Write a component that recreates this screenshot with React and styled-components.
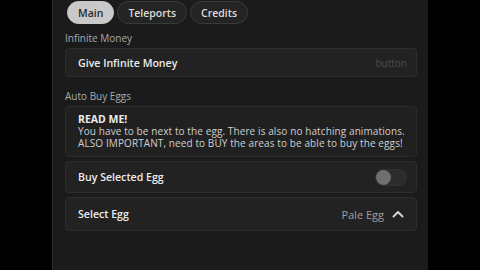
import React from 'react';
import styled, { createGlobalStyle } from 'styled-components';

const Global = createGlobalStyle`
  html, body { margin: 0; padding: 0; background: #000; }
  body { font-family: "Open Sans", "Noto Sans", sans-serif; }
  * { box-sizing: border-box; }
`;

const Screen = styled.div`
  width: 480px;
  height: 270px;
  display: flex;
  background: #000;
  overflow: hidden;
`;

const Panel = styled.div`
  margin-left: 52px;
  width: 376px;
  height: 100%;
  background: #1b1b1c;
  border-left: 1px solid #2a2d3a;
  padding: 1px 11px 0 12px;
  display: flex;
  flex-direction: column;
`;

const Tabs = styled.div`
  display: flex;
  gap: 3px;
  padding-left: 2px;
  margin-bottom: 8px;
`;

const Tab = styled.div`
  height: 23px;
  padding: 0 10px;
  border-radius: 12px;
  display: flex;
  align-items: center;
  font-size: 10.5px;
  font-weight: 600;
  color: ${p => (p.$active ? '#2a2a2a' : '#dcdcdc')};
  background: ${p => (p.$active ? '#c9c9c9' : '#242424')};
  border: 1px solid ${p => (p.$active ? '#c9c9c9' : '#3a3a3a')};
`;

const Label = styled.div`
  font-size: 10px;
  color: #a9a9a9;
  font-weight: 500;
  height: 13px;
  line-height: 13px;
  margin-bottom: 3px;
`;

const Card = styled.div`
  background: #222223;
  border: 1px solid #2e2e2f;
  border-radius: 4px;
  display: flex;
  align-items: center;
  justify-content: space-between;
  height: ${p => p.$h || 33}px;
  padding: 0 ${p => p.$pr ?? 9}px 0 12px;
  margin-bottom: ${p => p.$mb ?? 4}px;
`;

const Title = styled.div`
  font-size: 10.6px;
  font-weight: 600;
  color: #ececec;
`;

const Hint = styled.div`
  font-size: 10px;
  color: #4c4c4c;
`;

const Note = styled.div`
  background: #202021;
  border: 1px solid #2b2b2c;
  border-radius: 4px;
  padding: 6px 12px 0 12px;
  margin-bottom: 4px;
  height: 51px;
`;

const NoteHead = styled.div`
  font-size: 10.5px;
  font-weight: 700;
  color: #ececec;
  line-height: 12px;
`;

const NoteText = styled.div`
  font-size: 10px;
  letter-spacing: 0.1px;
  color: #cfcfcf;
  line-height: 12px;
  white-space: nowrap;
`;

const Toggle = styled.div`
  width: 32px;
  height: 17px;
  border-radius: 9px;
  background: #2c2c2c;
  border: 1px solid #333;
  display: flex;
  align-items: center;
`;

const Knob = styled.div`
  width: 15px;
  height: 15px;
  border-radius: 50%;
  background: #6f6f6f;
`;

const Right = styled.div`
  display: flex;
  align-items: center;
  gap: 8px;
  font-size: 11px;
  color: #a0a0a0;
  font-weight: 500;
`;

export default function App() {
  return (
    <Screen>
      <Global />
      <Panel>
        <Tabs>
          <Tab $active>Main</Tab>
          <Tab>Teleports</Tab>
          <Tab>Credits</Tab>
        </Tabs>
        <Label>Infinite Money</Label>
        <Card $h={29} $mb={13}>
          <Title>Give Infinite Money</Title>
          <Hint>button</Hint>
        </Card>
        <Label>Auto Buy Eggs</Label>
        <Note>
          <NoteHead>READ ME!</NoteHead>
          <NoteText>You have to be next to the egg. There is also no hatching animations.</NoteText>
          <NoteText>ALSO IMPORTANT, need to BUY the areas to be able to buy the eggs!</NoteText>
        </Note>
        <Card $h={32}>
          <Title>Buy Selected Egg</Title>
          <Toggle><Knob /></Toggle>
        </Card>
        <Card $h={34} $pr={12}>
          <Title>Select Egg</Title>
          <Right>
            Pale Egg
            <svg width="12" height="8" viewBox="0 0 12 8">
              <path d="M1.5 6.5 L6 2 L10.5 6.5" fill="none" stroke="#d0d0d0" strokeWidth="2" strokeLinecap="round" strokeLinejoin="round" />
            </svg>
          </Right>
        </Card>
      </Panel>
    </Screen>
  );
}
